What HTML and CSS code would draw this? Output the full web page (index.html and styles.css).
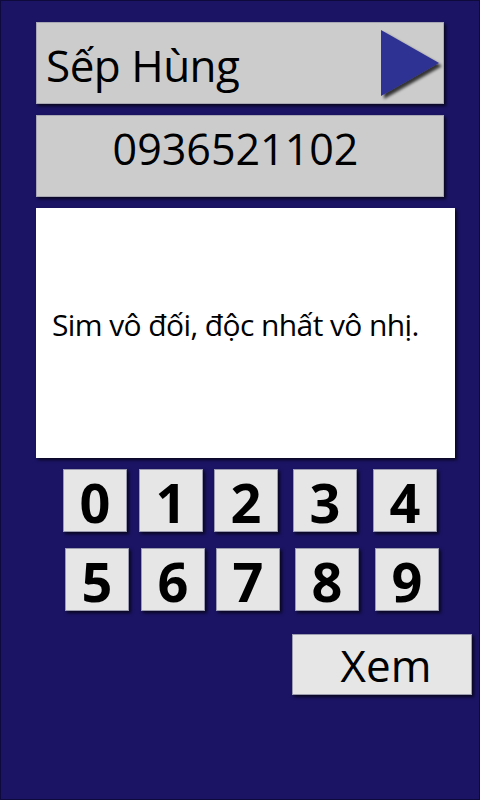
FILE: index.html
```html
<!DOCTYPE html>
<html lang="vi">
<head>
<meta charset="utf-8">
<title>Sim</title>
<link rel="stylesheet" href="styles.css">
</head>
<body>
<div class="screen">
  <div class="panel name-box">
    <span class="name">Sếp Hùng</span>
    <svg class="play" width="70" height="76" viewBox="0 0 70 76">
      <defs>
        <filter id="sh" x="-20%" y="-20%" width="150%" height="150%">
          <feGaussianBlur in="SourceAlpha" stdDeviation="1.6"/>
          <feOffset dx="3" dy="3" result="b"/>
          <feComponentTransfer><feFuncA type="linear" slope="0.75"/></feComponentTransfer>
          <feMerge><feMergeNode/><feMergeNode in="SourceGraphic"/></feMerge>
        </filter>
      </defs>
      <polygon points="2,2 60,35 2,68" fill="#2e3192" filter="url(#sh)"/>
    </svg>
  </div>
  <div class="panel phone-box">0936521102</div>
  <div class="message">Sim vô đối, độc nhất vô nhị.</div>
  <div class="keys row1">
    <div class="key">0</div>
    <div class="key">1</div>
    <div class="key">2</div>
    <div class="key">3</div>
    <div class="key">4</div>
  </div>
  <div class="keys row2">
    <div class="key">5</div>
    <div class="key">6</div>
    <div class="key">7</div>
    <div class="key">8</div>
    <div class="key">9</div>
  </div>
  <div class="xem">Xem</div>
</div>
</body>
</html>
```
FILE: styles.css
```css
* { box-sizing: border-box; }
html, body { margin: 0; padding: 0; }
body {
  background: #1b1464;
  font-family: "Open Sans", "Noto Sans", sans-serif;
  color: #000;
}
.screen {
  width: 480px;
  height: 800px;
  border: 1px solid #0e0a3c;
  display: flex;
  flex-direction: column;
  align-items: flex-start;
  overflow: hidden;
}
.panel {
  background: #cccccc;
  border: 1px solid #a8a8b4;
  box-shadow: 2px 2px 3px rgba(0, 0, 0, 0.7);
  width: 408px;
  height: 82px;
  margin-left: 35px;
}
.name-box {
  margin-top: 21px;
  display: flex;
  align-items: center;
  justify-content: space-between;
  padding-left: 9px;
  padding-right: 0;
}
.name {
  font-size: 44px;
  line-height: 1;
  margin-top: 4px;
  letter-spacing: -0.5px;
}
.play {
  display: block;
  margin-right: -6px;
  margin-top: 6px;
}
.phone-box {
  margin-top: 11px;
  display: flex;
  justify-content: center;
  align-items: flex-start;
  padding-top: 7px;
  padding-right: 9px;
  font-size: 43px;
  line-height: 1.2;
}
.message {
  margin-top: 11px;
  margin-left: 35px;
  width: 419px;
  height: 250px;
  background: #fff;
  box-shadow: 2px 2px 3px rgba(0, 0, 0, 0.7);
  display: flex;
  align-items: center;
  padding-left: 16px;
  padding-bottom: 17px;
  font-size: 30px;
  letter-spacing: -0.6px;
  white-space: nowrap;
}
.keys {
  display: flex;
}
.row1 { margin-top: 11px; margin-left: 62px; }
.row2 { margin-top: 16px; margin-left: 64px; }
.key {
  width: 64px;
  height: 63px;
  background: #e6e6e6;
  border: 1px solid #9c9cb0;
  box-shadow: 2px 2px 3px rgba(0, 0, 0, 0.7);
  display: flex;
  align-items: center;
  justify-content: center;
  font-weight: 700;
  font-size: 54px;
  line-height: 1;
  padding-top: 2px;
}
.key:nth-child(2) { margin-left: 12px; }
.key:nth-child(3) { margin-left: 11px; }
.key:nth-child(4) { margin-left: 15px; }
.key:nth-child(5) { margin-left: 16px; }
.xem {
  margin-top: 23px;
  margin-left: 291px;
  width: 180px;
  height: 61px;
  background: #e6e6e6;
  border: 1px solid #9c9cb0;
  box-shadow: 2px 2px 3px rgba(0, 0, 0, 0.7);
  display: flex;
  align-items: center;
  justify-content: center;
  font-size: 44px;
  line-height: 1;
  padding-left: 8px;
}
```
